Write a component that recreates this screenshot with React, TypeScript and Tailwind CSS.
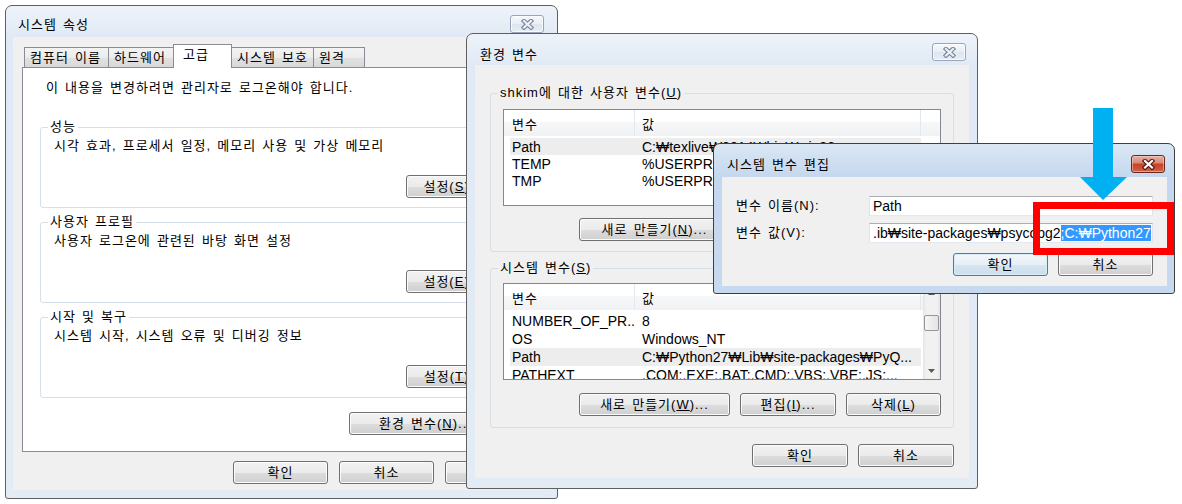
import React from "react";

const FONT = "font-['Liberation_Sans','Noto_Sans_CJK_KR',sans-serif]";

function CloseX({ active }: { active?: boolean }) {
  const d = "M3 2 L10 8.5 M10 2 L3 8.5";
  return (
    <svg width="13" height="11" viewBox="0 0 13 11">
      <path d={d} stroke={active ? "#4a1a12" : "#76839a"} strokeWidth="4.4" strokeLinecap="square" fill="none" />
      <path d={d} stroke={active ? "#ffffff" : "#eef2f7"} strokeWidth="2.2" strokeLinecap="square" fill="none" />
    </svg>
  );
}

function Win({
  className,
  title,
  titleCls,
  closeCls,
  barCls,
  active,
  children,
}: {
  className: string;
  title: string;
  titleCls: string;
  closeCls: string;
  barCls: string;
  active?: boolean;
  children: React.ReactNode;
}) {
  return (
    <div
      className={`absolute flex flex-col rounded-t-[7px] rounded-b-[3px] border ${
        active
          ? "border-[#3f3f3f] bg-[linear-gradient(#dbe7f4,#c3d7ee_34px,#c6d9ef)]"
          : "border-[#5f5f5f] bg-[linear-gradient(#eef3f9,#e0e9f4_32px,#e3ebf5)]"
      } ${className}`}
    >
      <div className={`flex shrink-0 items-start justify-between ${barCls}`}>
        <span className={`text-[13px] leading-[16px] text-black ${titleCls}`}>{title}</span>
        <div
          className={`flex h-[18px] w-[34px] items-center justify-center rounded-[3px] border ${
            active
              ? "border-[#6b261b] bg-[linear-gradient(#eab0a2,#d98a76_42%,#c4442b_52%,#cf6248)] shadow-[inset_0_0_0_1px_rgba(255,220,210,0.5)]"
              : "border-[#9aa5b8] bg-[linear-gradient(#f6f8fb,#e8eef5_50%,#dde5ef_52%,#e6edf5)] shadow-[inset_0_0_0_1px_rgba(255,255,255,0.7)]"
          } ${closeCls}`}
        >
          <CloseX active={active} />
        </div>
      </div>
      {children}
    </div>
  );
}

function Btn({
  className = "",
  def,
  children,
}: {
  className?: string;
  def?: boolean;
  children: React.ReactNode;
}) {
  return (
    <div
      className={`flex h-[23px] shrink-0 items-center justify-center overflow-hidden whitespace-nowrap rounded-[3px] border text-[13px] leading-[16px] text-black ${
        def
          ? "border-[#3c7fb1] bg-[linear-gradient(#f2f7fb,#e6eff6_50%,#d6e4ef_52%,#cddeec)] shadow-[inset_0_0_0_1px_#d9ecf9]"
          : "border-[#707070] bg-[linear-gradient(#f2f2f2,#ebebeb_50%,#dddddd_52%,#cfcfcf)] shadow-[inset_0_0_0_1px_#fbfbfb]"
      } ${className}`}
    >
      {children}
    </div>
  );
}

function Group({
  label,
  bg,
  className = "",
  children,
}: {
  label: React.ReactNode;
  bg: string;
  className?: string;
  children: React.ReactNode;
}) {
  return (
    <div className={`relative flex shrink-0 flex-col rounded-[3px] border border-[#d5dfe5] ${className}`}>
      <span className={`absolute left-[7px] top-[-9px] whitespace-nowrap px-[2px] leading-[16px] ${bg}`}>{label}</span>
      {children}
    </div>
  );
}

function ScrollBar() {
  return (
    <div className="flex w-[17px] shrink-0 flex-col bg-[linear-gradient(90deg,#e4e4e4,#f1f1f1_18%,#f1f1f1_82%,#e4e4e4)]">
      <div className="flex h-[17px] shrink-0 items-center justify-center">
        <svg width="7" height="4" viewBox="0 0 7 4">
          <path d="M0 4 L3.5 0 L7 4 Z" fill="#5a5a5a" />
        </svg>
      </div>
      <div className="mx-px mt-[14px] h-[16px] shrink-0 rounded-[2px] border border-[#979797] bg-[linear-gradient(90deg,#f6f6f6,#e4e4e4)]" />
      <div className="flex-1" />
      <div className="flex h-[17px] shrink-0 items-center justify-center">
        <svg width="7" height="4" viewBox="0 0 7 4">
          <path d="M0 0 L3.5 4 L7 0 Z" fill="#5a5a5a" />
        </svg>
      </div>
    </div>
  );
}

type Row = { k: string; v: string; sel?: boolean };

function ListView({ rows, rowH, scroll, className = "" }: { rows: Row[]; rowH: string; scroll?: boolean; className?: string }) {
  return (
    <div className={`mx-[12px] flex h-[97px] shrink-0 overflow-hidden border border-[#828790] bg-white ${className}`}>
      <div className="flex min-w-0 flex-1 flex-col">
        <div className="flex h-[26px] shrink-0 bg-[linear-gradient(#ffffff,#ffffff_45%,#f6f7f9_46%,#f1f2f4)]">
          <div className="w-[131px] shrink-0 border-r border-[#e3e8ee] pl-[8px] pt-[7px] leading-[16px]">변수</div>
          <div className="w-[286px] shrink-0 border-r border-[#e3e8ee] pl-[7px] pt-[7px] leading-[16px]">값</div>
        </div>
        <div className="mt-[2px] flex flex-col">
          {rows.map((r) => (
            <div
              key={r.k}
              className={`ml-[6px] flex w-[411px] shrink-0 items-center whitespace-nowrap text-[14px] tracking-normal [word-spacing:0px] ${rowH} ${
                r.sel ? "bg-[#ededed]" : ""
              }`}
            >
              <span className="w-[125px] shrink-0 overflow-hidden pl-[2px]">{r.k}</span>
              <span className="min-w-0 flex-1 overflow-hidden pl-[7px]">{r.v}</span>
            </div>
          ))}
        </div>
      </div>
      {scroll && <ScrollBar />}
    </div>
  );
}

const tabs = [
  { t: "컴퓨터 이름", w: "w-[85px]" },
  { t: "하드웨어", w: "w-[66px]" },
  { t: "고급", w: "w-[59px]", sel: true },
  { t: "시스템 보호", w: "w-[83px]" },
  { t: "원격", w: "w-[52px]" },
];

const perf = [
  { label: "성능", text: "시각 효과, 프로세서 일정, 메모리 사용 및 가상 메모리", key: "S" },
  { label: "사용자 프로필", text: "사용자 로그온에 관련된 바탕 화면 설정", key: "E" },
  { label: "시작 및 복구", text: "시스템 시작, 시스템 오류 및 디버깅 정보", key: "T" },
];

const INPUT =
  "flex h-[20px] min-w-0 flex-1 items-center overflow-hidden whitespace-nowrap border border-[#abadb3] border-b-[#e3e9ef] border-l-[#e2e3ea] border-r-[#e2e3ea] bg-white pl-[3px] text-[14px] tracking-normal [word-spacing:0px]";

export default function App() {
  return (
    <div
      className={`relative h-[504px] w-[1182px] overflow-hidden bg-white text-[13px] leading-[16px] tracking-[1px] text-black [word-spacing:1.5px] ${FONT}`}
    >
      {/* 시스템 속성 */}
      <Win
        className="left-[5px] top-[5px] h-[494px] w-[553px]"
        title="시스템 속성"
        barCls="h-[31px]"
        titleCls="ml-[12px] mt-[11px]"
        closeCls="mr-[13px] mt-[9px]"
      >
        <div className="mx-[7px] mb-[8px] flex flex-1 flex-col bg-[#f0f0f0]">
          <div className="ml-[11px] mt-[7px] flex h-[23px] shrink-0 items-end">
            {tabs.map((t, i) => (
              <div
                key={t.t}
                className={`${t.w} ${i > 0 ? "-ml-px" : ""} flex shrink-0 whitespace-nowrap border border-b-0 border-[#898c95] leading-[16px] ${
                  t.sel
                    ? "relative z-10 -mb-px h-[24px] items-start bg-white pl-[9px] pt-[2px]"
                    : "h-[20px] items-center bg-[linear-gradient(#f3f3f3,#ececec_50%,#e1e1e1_52%,#d8d8d8)] pl-[5px]"
                }`}
              >
                {t.t}
              </div>
            ))}
          </div>
          <div className="ml-[9px] mr-[9px] flex h-[385px] shrink-0 flex-col border border-[#898c95] bg-white">
            <div className="pl-[23px] pt-[12px] leading-[16px]">이 내용을 변경하려면 관리자로 로그온해야 합니다.</div>
            <div className="ml-[17px] mt-[31px] flex flex-col gap-[14px]">
              {perf.map((g) => (
                <Group key={g.label} label={g.label} bg="bg-white" className="h-[81px] w-[483px]">
                  <div className="pl-[13px] pt-[10px] leading-[16px]">{g.text}</div>
                  <Btn className="mr-[21px] mt-[21px] w-[95px] self-end">
                    설정(<u>{g.key}</u>)...
                  </Btn>
                </Group>
              ))}
            </div>
            <div className="mr-[38px] mt-[14px] flex justify-end">
              <Btn className="w-[153px]">
                환경 변수(<u>N</u>)...
              </Btn>
            </div>
          </div>
          <div className="mt-[9px] flex justify-end gap-[11px] pr-[10px]">
            <Btn className="w-[95px]">확인</Btn>
            <Btn className="w-[95px]">취소</Btn>
            <Btn className="w-[95px]">
              적용(<u>A</u>)
            </Btn>
          </div>
        </div>
      </Win>

      {/* 환경 변수 */}
      <Win
        className="left-[466px] top-[33px] h-[456px] w-[512px]"
        title="환경 변수"
        barCls="h-[31px]"
        titleCls="ml-[13px] mt-[13px]"
        closeCls="mr-[11px] mt-[9px]"
      >
        <div className="mx-[8px] mb-[10px] flex flex-1 flex-col bg-[#f0f0f0] px-[15px] pt-[28px]">
          <Group
            bg="bg-[#f0f0f0]"
            className="h-[159px]"
            label={
              <>
                shkim에 대한 사용자 변수(<u>U</u>)
              </>
            }
          >
            <ListView
              className="mt-[15px]"
              rowH="h-[17px]"
              rows={[
                { k: "Path", v: "C:₩texlive₩2014₩bin₩win32", sel: true },
                { k: "TEMP", v: "%USERPROFILE%₩AppData₩Local₩Temp" },
                { k: "TMP", v: "%USERPROFILE%₩AppData₩Local₩Temp" },
              ]}
            />
            <div className="mr-[12px] mt-[12px] flex justify-end gap-[10px]">
              <Btn className="w-[151px]">
                새로 만들기(<u>N</u>)...
              </Btn>
              <Btn className="w-[96px]">
                편집(<u>E</u>)...
              </Btn>
              <Btn className="w-[95px]">
                삭제(<u>D</u>)
              </Btn>
            </div>
          </Group>
          <Group
            bg="bg-[#f0f0f0]"
            className="mt-[16px] h-[160px]"
            label={
              <>
                시스템 변수(<u>S</u>)
              </>
            }
          >
            <ListView
              className="mt-[14px]"
              rowH="h-[18px]"
              scroll
              rows={[
                { k: "NUMBER_OF_PR...", v: "8" },
                { k: "OS", v: "Windows_NT" },
                { k: "Path", v: "C:₩Python27₩Lib₩site-packages₩PyQ...", sel: true },
                { k: "PATHEXT", v: ".COM;.EXE;.BAT;.CMD;.VBS;.VBE;.JS;..." },
              ]}
            />
            <div className="mr-[12px] mt-[13px] flex justify-end gap-[10px]">
              <Btn className="w-[151px]">
                새로 만들기(<u>W</u>)...
              </Btn>
              <Btn className="w-[96px]">
                편집(<u>I</u>)...
              </Btn>
              <Btn className="w-[95px]">
                삭제(<u>L</u>)
              </Btn>
            </div>
          </Group>
          <div className="mt-[16px] flex justify-end gap-[10px]">
            <Btn className="w-[96px]">확인</Btn>
            <Btn className="w-[96px]">취소</Btn>
          </div>
        </div>
      </Win>

      {/* 시스템 변수 편집 */}
      <Win
        active
        className="left-[713px] top-[143px] h-[151px] w-[462px]"
        title="시스템 변수 편집"
        barCls="h-[33px]"
        titleCls="ml-[13px] mt-[13px]"
        closeCls="mr-[9px] mt-[11px]"
      >
        <div className="mb-[7px] ml-[8px] mr-[7px] flex flex-1 flex-col bg-[#f0f0f0] px-[14px] pt-[19px]">
          <div className="flex h-[20px] items-center">
            <span className="w-[133px] shrink-0">변수 이름(N):</span>
            <div className={INPUT}>Path</div>
          </div>
          <div className="mt-[7px] flex h-[20px] items-center">
            <span className="w-[133px] shrink-0">변수 값(V):</span>
            <div className={INPUT}>
              .ib₩site-packages₩psycopg2<span className="bg-[#3399ff] text-white">;C:₩Python27</span>
            </div>
          </div>
          <div className="mt-[10px] flex justify-end gap-[10px]">
            <Btn def className="w-[95px]">
              확인
            </Btn>
            <Btn className="w-[95px]">취소</Btn>
          </div>
        </div>
      </Win>

      {/* annotation: red box */}
      <div className="absolute left-[1033px] top-[202px] h-[53px] w-[141px] border-[7px] border-[#ff0000]" />
      {/* annotation: blue arrow */}
      <svg className="absolute left-[1078px] top-[104px]" width="52" height="98" viewBox="0 0 52 98">
        <path d="M15 4 H35 V73 H49 L25 96 L2 73 H15 Z" fill="#00b0f0" />
      </svg>
    </div>
  );
}
